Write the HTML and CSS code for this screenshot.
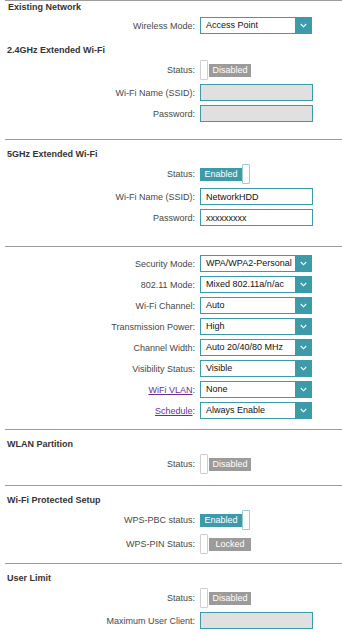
FILE: index.html
```html
<!DOCTYPE html>
<html lang="en">
<head>
    <meta charset="UTF-8">
    <meta name="viewport" content="width=device-width, initial-scale=1.0">
    <title>Extender Wi-Fi Settings</title>
    <link rel="stylesheet" href="styles.css">
</head>
<body>
    <!-- Existing network + 2.4GHz -->
    <div class="section section-first">
        <div class="title">Existing Network</div>
        <div class="row">
            <span class="label">Wireless Mode:</span>
            <div class="select"><span class="select-value">Access Point</span><span class="select-arrow"><svg width="7" height="5" viewBox="0 0 7 5"><polyline points="0.8,1 3.5,3.8 6.2,1" fill="none" stroke="#fff" stroke-width="1.1"/></svg></span></div>
        </div>

        <div class="title title-sub">2.4GHz Extended Wi-Fi</div>
        <div class="row row-toggle">
            <span class="label">Status:</span>
            <div class="toggle off"><span class="knob"></span><span class="toggle-text">Disabled</span></div>
        </div>
        <div class="row">
            <span class="label">Wi-Fi Name (SSID):</span>
            <input class="field" type="text" value="" disabled>
        </div>
        <div class="row">
            <span class="label">Password:</span>
            <input class="field" type="text" value="" disabled>
        </div>
    </div>

    <!-- 5GHz -->
    <div class="section section-tall">
        <div class="title">5GHz Extended Wi-Fi</div>
        <div class="row row-toggle">
            <span class="label">Status:</span>
            <div class="toggle on"><span class="toggle-text">Enabled</span><span class="knob"></span></div>
        </div>
        <div class="row">
            <span class="label">Wi-Fi Name (SSID):</span>
            <input class="field" type="text" value="NetworkHDD">
        </div>
        <div class="row">
            <span class="label">Password:</span>
            <input class="field" type="text" value="xxxxxxxxx">
        </div>
    </div>

    <!-- Advanced -->
    <div class="section section-plain">
        <div class="row">
            <span class="label">Security Mode:</span>
            <div class="select"><span class="select-value">WPA/WPA2-Personal</span><span class="select-arrow"><svg width="7" height="5" viewBox="0 0 7 5"><polyline points="0.8,1 3.5,3.8 6.2,1" fill="none" stroke="#fff" stroke-width="1.1"/></svg></span></div>
        </div>
        <div class="row">
            <span class="label">802.11 Mode:</span>
            <div class="select"><span class="select-value">Mixed 802.11a/n/ac</span><span class="select-arrow"><svg width="7" height="5" viewBox="0 0 7 5"><polyline points="0.8,1 3.5,3.8 6.2,1" fill="none" stroke="#fff" stroke-width="1.1"/></svg></span></div>
        </div>
        <div class="row">
            <span class="label">Wi-Fi Channel:</span>
            <div class="select"><span class="select-value">Auto</span><span class="select-arrow"><svg width="7" height="5" viewBox="0 0 7 5"><polyline points="0.8,1 3.5,3.8 6.2,1" fill="none" stroke="#fff" stroke-width="1.1"/></svg></span></div>
        </div>
        <div class="row">
            <span class="label">Transmission Power:</span>
            <div class="select"><span class="select-value">High</span><span class="select-arrow"><svg width="7" height="5" viewBox="0 0 7 5"><polyline points="0.8,1 3.5,3.8 6.2,1" fill="none" stroke="#fff" stroke-width="1.1"/></svg></span></div>
        </div>
        <div class="row">
            <span class="label">Channel Width:</span>
            <div class="select"><span class="select-value">Auto 20/40/80 MHz</span><span class="select-arrow"><svg width="7" height="5" viewBox="0 0 7 5"><polyline points="0.8,1 3.5,3.8 6.2,1" fill="none" stroke="#fff" stroke-width="1.1"/></svg></span></div>
        </div>
        <div class="row">
            <span class="label">Visibility Status:</span>
            <div class="select"><span class="select-value">Visible</span><span class="select-arrow"><svg width="7" height="5" viewBox="0 0 7 5"><polyline points="0.8,1 3.5,3.8 6.2,1" fill="none" stroke="#fff" stroke-width="1.1"/></svg></span></div>
        </div>
        <div class="row">
            <span class="label"><a href="#">WiFi VLAN</a>:</span>
            <div class="select"><span class="select-value">None</span><span class="select-arrow"><svg width="7" height="5" viewBox="0 0 7 5"><polyline points="0.8,1 3.5,3.8 6.2,1" fill="none" stroke="#fff" stroke-width="1.1"/></svg></span></div>
        </div>
        <div class="row">
            <span class="label"><a href="#">Schedule</a>:</span>
            <div class="select"><span class="select-value">Always Enable</span><span class="select-arrow"><svg width="7" height="5" viewBox="0 0 7 5"><polyline points="0.8,1 3.5,3.8 6.2,1" fill="none" stroke="#fff" stroke-width="1.1"/></svg></span></div>
        </div>
    </div>

    <!-- WLAN Partition -->
    <div class="section section-short">
        <div class="title">WLAN Partition</div>
        <div class="row row-toggle">
            <span class="label">Status:</span>
            <div class="toggle off"><span class="knob"></span><span class="toggle-text">Disabled</span></div>
        </div>
    </div>

    <!-- WPS -->
    <div class="section">
        <div class="title">Wi-Fi Protected Setup</div>
        <div class="row row-toggle">
            <span class="label">WPS-PBC status:</span>
            <div class="toggle on"><span class="toggle-text">Enabled</span><span class="knob"></span></div>
        </div>
        <div class="row row-toggle">
            <span class="label">WPS-PIN Status:</span>
            <div class="toggle off"><span class="knob"></span><span class="toggle-text">Locked</span></div>
        </div>
    </div>

    <!-- User limit -->
    <div class="section">
        <div class="title">User Limit</div>
        <div class="row row-toggle">
            <span class="label">Status:</span>
            <div class="toggle off"><span class="knob"></span><span class="toggle-text">Disabled</span></div>
        </div>
        <div class="row">
            <span class="label">Maximum User Client:</span>
            <input class="field" type="text" value="" disabled>
        </div>
    </div>
</body>
</html>
```

FILE: styles.css
```css
/* General */
body {
    margin: 0;
    font-family: "Liberation Sans", Arial, Helvetica, sans-serif;
    font-size: 9px;
    color: #484848;
    background-color: #fff;
}

/* Sections */
.section {
    margin-left: 5px;
    border-top: 1px solid #9d9d9d;
    padding-bottom: 9px;
}

.section-first {
    padding-bottom: 17px;
}

.section-tall {
    padding-bottom: 20px;
}

.section-plain {
    padding-bottom: 10px;
    padding-top: 4px;
}

.section-short {
    padding-bottom: 11px;
}

.title {
    font-weight: bold;
    color: #333;
    line-height: 12px;
    margin-top: 8px;
    padding-left: 2px;
}

.section-first .title:first-child {
    margin-top: 0;
    padding-left: 3px;
}

.title-sub {
    margin-top: 10px !important;
}

/* Rows */
.row {
    display: flex;
    align-items: center;
    gap: 5px;
    height: 17px;
    margin-top: 4px;
}

.row-toggle {
    height: 20px;
}

.label {
    width: 190px;
    text-align: right;
    flex-shrink: 0;
}

.label a {
    color: #6b2f93;
    text-decoration: underline;
}

/* Select boxes */
.select {
    display: flex;
    width: 112px;
    height: 17px;
    box-sizing: border-box;
    border: 1px solid #3d9aa9;
    background-color: #fff;
}

.select-value {
    flex: 1;
    color: #111;
    line-height: 15px;
    padding-left: 5px;
    white-space: nowrap;
    overflow: hidden;
}

.select-arrow {
    width: 16px;
    background-color: #3d9aa9;
    display: flex;
    align-items: center;
    justify-content: center;
}

/* Text inputs */
.field {
    width: 113px;
    height: 17px;
    box-sizing: border-box;
    border: 1px solid #3d9aa9;
    padding: 0 5px;
    margin: 0;
    font-family: inherit;
    font-size: 9px;
    color: #111;
    background-color: #fff;
    outline: none;
}

.field:disabled {
    background-color: #e0e0e0;
}

/* Toggles */
.toggle {
    display: flex;
    align-items: center;
    height: 20px;
}

.knob {
    width: 8px;
    height: 20px;
    box-sizing: border-box;
    border: 1px solid #cfcfcf;
    border-radius: 1px;
    background-color: #fff;
}

.toggle.on .knob {
    border-color: #9fcbd3;
}

.toggle-text {
    width: 42px;
    height: 13px;
    line-height: 13px;
    text-align: center;
    color: #fff;
}

.toggle.off .toggle-text {
    background-color: #9b9b9b;
    margin-left: 1px;
}

.toggle.on .toggle-text {
    background-color: #3d9aa9;
}
```
